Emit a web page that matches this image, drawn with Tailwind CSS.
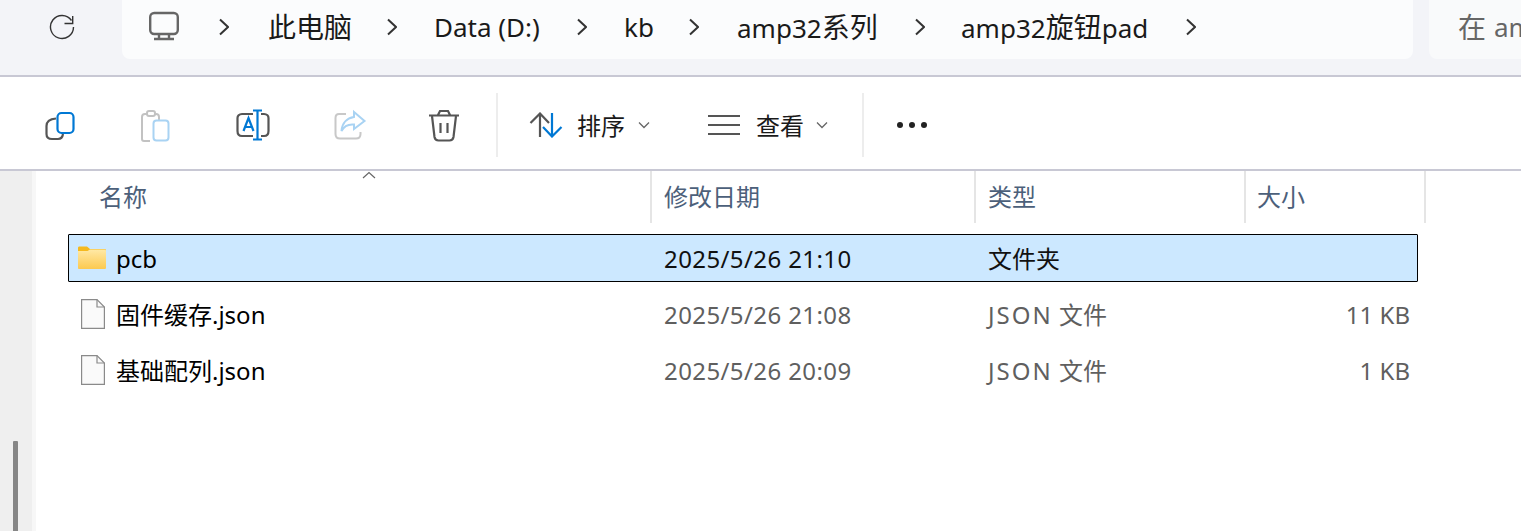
<!DOCTYPE html>
<html lang="zh">
<head>
  <meta charset="UTF-8" />
  <title>amp32旋钮pad</title>
  <script src="https://cdn.jsdelivr.net/npm/@tailwindcss/browser@4"></script>
</head>
<body class="w-[1521px] h-[531px] overflow-hidden bg-white font-['Noto_Sans','Noto_Sans_CJK_SC',sans-serif]">

  <!-- Address bar -->
  <header class="flex h-[77px] bg-[#f3f4f8] border-b-2 border-[#c8c8d4]">
    <div class="w-[122px] flex items-start pl-[49px] pt-[14px] shrink-0">
      <svg width="26" height="26" viewBox="0 0 26 26" fill="none" stroke="#333" stroke-width="1.4">
        <path d="M22.500 6.500A11.500 11.500 0 1 0 24.500 13" />
        <path d="M23.700 2V9.500H15.500" />
      </svg>
    </div>
    <nav class="w-[1291px] h-[59px] pb-[5px] shrink-0 flex items-center bg-[#fbfcfd] rounded-b-lg text-[26px] text-[#1a1a1a] whitespace-nowrap">
      <svg class="ml-[26px] w-[34px] h-[32px] shrink-0" viewBox="0 0 34 32" fill="none" stroke="#666" stroke-width="2.400">
        <rect x="2.200" y="2" width="27.600" height="21" rx="4" />
        <path d="M11 23V28M21 23V28M6 28H26" />
      </svg>
      <svg class="ml-[37px] w-[10px] h-[18px] shrink-0" viewBox="0 0 10 18" fill="none" stroke="#333" stroke-width="2"><path d="M1 1.500L9 9L1 16.500" /></svg>
      <span class="ml-[39px] w-[84px] text-[28px]">此电脑</span>
      <svg class="ml-[35px] w-[10px] h-[18px] shrink-0" viewBox="0 0 10 18" fill="none" stroke="#333" stroke-width="2"><path d="M1 1.500L9 9L1 16.500" /></svg>
      <span class="ml-[37px] w-[105px]">Data (D:)</span>
      <svg class="ml-[38px] w-[10px] h-[18px] shrink-0" viewBox="0 0 10 18" fill="none" stroke="#333" stroke-width="2"><path d="M1 1.500L9 9L1 16.500" /></svg>
      <span class="ml-[37px] w-[28px]">kb</span>
      <svg class="ml-[37px] w-[10px] h-[18px] shrink-0" viewBox="0 0 10 18" fill="none" stroke="#333" stroke-width="2"><path d="M1 1.500L9 9L1 16.500" /></svg>
      <span class="ml-[38px] w-[140px]">amp32<span class="text-[28px]">系列</span></span>
      <svg class="ml-[38px] w-[10px] h-[18px] shrink-0" viewBox="0 0 10 18" fill="none" stroke="#333" stroke-width="2"><path d="M1 1.500L9 9L1 16.500" /></svg>
      <span class="ml-[36px] w-[187px]">amp32<span class="text-[28px]">旋钮</span>pad</span>
      <svg class="ml-[38px] w-[10px] h-[18px] shrink-0" viewBox="0 0 10 18" fill="none" stroke="#333" stroke-width="2"><path d="M1 1.500L9 9L1 16.500" /></svg>
    </nav>
    <div class="ml-[16px] flex-1 h-[59px] pb-[5px] bg-[#f9fafb] rounded-bl-lg pl-[29px] flex items-center text-[26px] text-[#666] whitespace-nowrap overflow-hidden"><span class="text-[28px] mr-[8px]">在</span>amp32旋钮pad 中搜索</div>
  </header>

  <!-- Command bar -->
  <section class="flex items-center h-[94px] pt-[3px] border-b-2 border-[#c8c8d4] text-[24px] text-[#1a1a1a]">
    <svg class="ml-[42px] w-[36px] h-[36px] shrink-0" viewBox="0 0 36 36" fill="none" stroke-width="2.200">
      <path d="M14 11.500C8 12 4.500 14 4.500 19V27C4.500 30 6.500 32 10 32H16C19 32 20.500 30.500 21 27" stroke="#555" />
      <rect x="15.500" y="6" width="16" height="20" rx="4" stroke="#0078d4" />
    </svg>
    <svg class="ml-[60px] w-[36px] h-[36px] shrink-0" viewBox="0 0 36 36" fill="none" stroke-width="2">
      <path d="M9 7H7C5 7 4 8 4 10V32C4 33.500 5 34 6 34H12M21 14V10C21 8 20 7 18 7H16" stroke="#c2c2c2" />
      <rect x="9" y="4" width="8" height="5" rx="2" stroke="#c2c2c2" />
      <rect x="15.500" y="13.500" width="15" height="20" rx="3" stroke="#a9d3f3" />
    </svg>
    <svg class="ml-[60px] w-[40px] h-[36px] shrink-0" viewBox="0 0 40 36" fill="none" stroke-width="2.200">
      <path d="M19 7H8C5 7 3.500 9 3.500 11V24C3.500 27 5 29 8 29H19M27 7H30C33 7 34.500 9 34.500 11V24C34.500 27 33 29 30 29H27" stroke="#555" />
      <path d="M23.500 3.500V32.500M19 3.500H28M19 32.500H28" stroke="#0078d4" />
      <path d="M9.500 24L14.500 11L19.500 24M11 20H18" stroke="#0078d4" />
    </svg>
    <svg class="ml-[58px] w-[36px] h-[36px] shrink-0" viewBox="0 0 36 36" fill="none" stroke-width="2">
      <path d="M14 7H7C4.500 7 3.500 9 3.500 11V27C3.500 30 5 31.500 8 31.500H24C27 31.500 28.500 30 28.500 27V25" stroke="#c8c8c8" />
      <path d="M22 5L32.500 14L22 22V17.500C17 17 12 19 9.500 24C10 16 15 11 22 10Z" stroke="#a9d3f3" />
    </svg>
    <svg class="ml-[58px] w-[36px] h-[36px] shrink-0" viewBox="0 0 36 36" fill="none" stroke="#555" stroke-width="2.200">
      <path d="M3 8.500H33M12 8L14 4H22L24 8" />
      <path d="M6 9L8.500 30C9 32.500 10.500 33.500 12.500 33.500H23.500C25.500 33.500 27 32.500 27.500 30L30 9" />
      <path d="M14.500 16V26M21.500 16V26" />
    </svg>
    <div class="ml-[34px] w-[2px] h-[64px] bg-[#ededed] shrink-0"></div>

    <svg class="ml-[31px] w-[34px] h-[26px] shrink-0" viewBox="0 0 34 26" fill="none" stroke-width="2.200">
      <path d="M11 25V2M1.500 11L11 1.500L20 11" stroke="#555" />
      <path d="M23 1V24M14 15L23 24.500L32.500 15" stroke="#0078d4" />
    </svg>
    <span class="ml-[14px] w-[50px] pt-[3px] whitespace-nowrap">排序</span>
    <svg class="ml-[11px] w-[12px] h-[8px] shrink-0" viewBox="0 0 12 8" fill="none" stroke="#666" stroke-width="1.300"><path d="M1 1.500L6 6.500L11 1.500" /></svg>
    <svg class="ml-[58px] w-[32px] h-[22px] shrink-0" viewBox="0 0 32 22" fill="none" stroke="#555" stroke-width="2"><path d="M0 2H32M0 11H32M0 20H32" /></svg>
    <span class="ml-[16px] w-[50px] pt-[3px] whitespace-nowrap">查看</span>
    <svg class="ml-[10px] w-[12px] h-[8px] shrink-0" viewBox="0 0 12 8" fill="none" stroke="#666" stroke-width="1.300"><path d="M1 1.500L6 6.500L11 1.500" /></svg>
    <div class="ml-[34px] w-[2px] h-[64px] bg-[#ededed] shrink-0"></div>
    <div class="ml-[33px] flex gap-[6px] shrink-0">
      <div class="w-[6px] h-[6px] rounded-full bg-[#222]"></div>
      <div class="w-[6px] h-[6px] rounded-full bg-[#222]"></div>
      <div class="w-[6px] h-[6px] rounded-full bg-[#222]"></div>
    </div>
  </section>

  <main class="flex h-[360px]">
    <!-- Nav pane, with its scrollbar -->
    <aside class="w-[32px] bg-[#efefef] shrink-0 pt-[270px] pl-[13px]">
      <div class="w-[5px] h-[90px] bg-[#868686] rounded-t-[1px]"></div>
    </aside>
    <div class="w-[4px] bg-[#f7f7f7] shrink-0"></div>

    <div class="flex-1">
      <!-- Column headers -->
      <div class="relative flex h-[52px] items-center text-[24px] text-[#4c607a]">
        <svg class="absolute left-[326px] top-[0px] w-[14px] h-[8px]" viewBox="0 0 14 8" fill="none" stroke="#666" stroke-width="1.200"><path d="M1 7L7 1.500L13 7" /></svg>
        <div class="w-[616px] h-full pl-[63px] flex items-center border-r-2 border-[#e5e5e5]">名称</div>
        <div class="w-[324px] h-full pl-[12px] flex items-center border-r-2 border-[#e5e5e5]">修改日期</div>
        <div class="w-[270px] h-full pl-[12px] flex items-center border-r-2 border-[#e5e5e5]">类型</div>
        <div class="w-[180px] h-full pl-[11px] flex items-center border-r-2 border-[#e5e5e5]">大小</div>
      </div>

      <!-- File rows -->
      <div class="mt-[11px] ml-[32px] w-[1350px] flex flex-col gap-[8px] text-[24px] text-[#5f5f5f]">
        <div class="flex items-center h-[48px] pt-[2px] bg-[#cce8ff] border border-black rounded-[1px] text-[#111]">
          <svg class="ml-[8px] mb-[4px] w-[29px] h-[23px] shrink-0" viewBox="0 0 29 23">
            <defs>
              <linearGradient id="folder" x1="0" y1="0" x2="0" y2="1">
                <stop offset="0" stop-color="#ffe9a6" />
                <stop offset="1" stop-color="#fcc94f" />
              </linearGradient>
            </defs>
            <path d="M1 2C1 1 1.500 0.500 2.500 0.500H10L13 3H27.500C28.500 3 29 3.500 29 4.500V8H1Z" fill="#f5b91e" />
            <path d="M1 5H10.500L13 3.500H27.500C28.500 3.500 29 4 29 5V21.500C29 22.500 28.500 23 27.500 23H2C1.500 23 1 22.500 1 21.500Z" fill="url(#folder)" />
          </svg>
          <span class="ml-[10px] w-[548px] text-black">pcb</span>
          <span class="w-[324px] tracking-[0.4px]">2025/5/26 21:10</span>
          <span>文件夹</span>
        </div>
        <div class="flex items-center h-[48px] pt-[2px]">
          <svg class="ml-[13px] mb-[2px] w-[24px] h-[30px] shrink-0" viewBox="0 0 24 30" fill="#fafafa" stroke="#8a8a8a" stroke-width="1.200">
            <path d="M0.600 0.600H16L23.400 8V29.400H0.600Z" />
            <path d="M16 0.600V8H23.400" fill="none" />
          </svg>
          <span class="ml-[11px] w-[548px] text-black">固件缓存.json</span>
          <span class="w-[324px] tracking-[0.4px]">2025/5/26 21:08</span>
          <span class="w-[260px]"><span class="tracking-[2px]">JSON</span> 文件</span>
          <span class="w-[162px] text-right">11 KB</span>
        </div>
        <div class="flex items-center h-[48px] pt-[2px]">
          <svg class="ml-[13px] mb-[2px] w-[24px] h-[30px] shrink-0" viewBox="0 0 24 30" fill="#fafafa" stroke="#8a8a8a" stroke-width="1.200">
            <path d="M0.600 0.600H16L23.400 8V29.400H0.600Z" />
            <path d="M16 0.600V8H23.400" fill="none" />
          </svg>
          <span class="ml-[11px] w-[548px] text-black">基础配列.json</span>
          <span class="w-[324px] tracking-[0.4px]">2025/5/26 20:09</span>
          <span class="w-[260px]"><span class="tracking-[2px]">JSON</span> 文件</span>
          <span class="w-[162px] text-right">1 KB</span>
        </div>
      </div>
    </div>
  </main>
</body>
</html>
